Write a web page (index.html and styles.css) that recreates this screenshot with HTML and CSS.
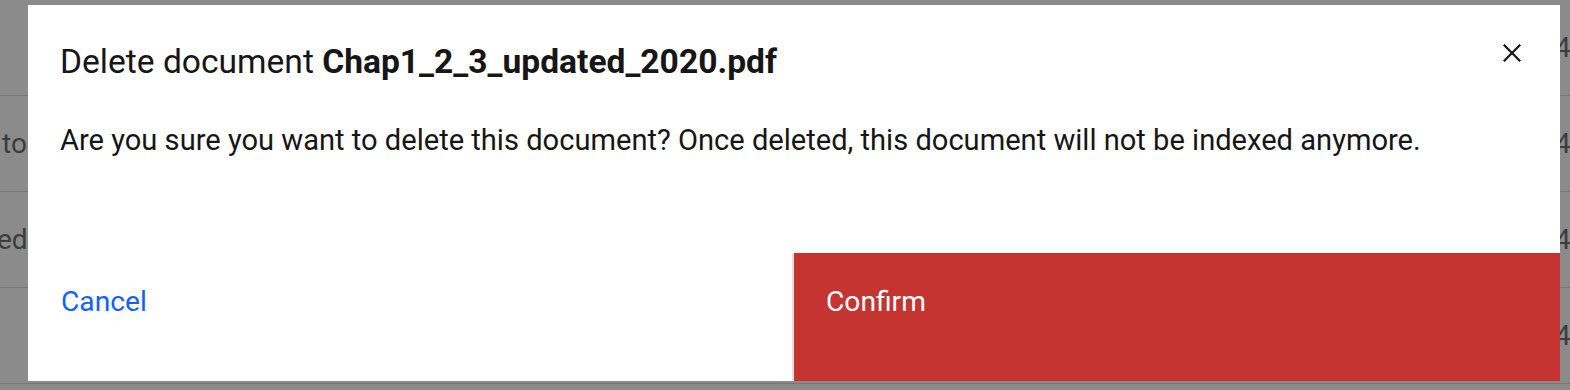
FILE: index.html
```html
<!DOCTYPE html>
<html lang="en">
<head>
<meta charset="utf-8">
<title>Delete document</title>
<link rel="stylesheet" href="styles.css">
</head>
<body>
<div class="table">
  <div class="row"><span class="cell-left"></span><span class="cell-right">4</span></div>
  <div class="row"><span class="cell-left">to</span><span class="cell-right">4</span></div>
  <div class="row"><span class="cell-left cut">ed</span><span class="cell-right">4</span></div>
  <div class="row"><span class="cell-left"></span><span class="cell-right">4</span></div>
  <div class="row row-partial"></div>
</div>

<div class="modal" role="dialog" aria-labelledby="modal-title">
  <header class="modal-header">
    <h2 class="modal-title" id="modal-title">Delete document <strong>Chap1_2_3_updated_2020.pdf</strong></h2>
    <button class="modal-close" type="button" aria-label="Close">
      <svg width="36" height="36" viewBox="0 0 32 32" aria-hidden="true"><path d="M24 9.4L22.6 8 16 14.6 9.4 8 8 9.4 14.6 16 8 22.6 9.4 24 16 17.4 22.6 24 24 22.6 17.4 16 24 9.4z"/></svg>
    </button>
  </header>
  <div class="modal-content">
    <p>Are you sure you want to delete this document? Once deleted, this document will not be indexed anymore.</p>
  </div>
  <footer class="modal-footer">
    <button class="btn btn-ghost" type="button">Cancel</button>
    <button class="btn btn-danger" type="button">Confirm</button>
  </footer>
</div>
</body>
</html>
```
FILE: styles.css
```css
* { box-sizing: border-box; }
html, body { margin: 0; padding: 0; }
body {
  width: 1570px;
  height: 390px;
  overflow: hidden;
  background: #8b8b8b;
  font-family: Roboto, "Liberation Sans", sans-serif;
  position: relative;
}

.table {
  display: flex;
  flex-direction: column;
  height: 390px;
  overflow: hidden;
}
.row {
  flex: none;
  height: 96px;
  border-bottom: 1px solid #767676;
  display: flex;
  align-items: center;
  justify-content: space-between;
  color: #3c3c3c;
  font-size: 28px;
}
.row-partial { flex: 1; height: auto; border-bottom: 0; }
.cell-left { padding-left: 2px; }
.cell-left.cut { margin-left: -3px; padding-left: 0; }
.cell-right { width: 15px; overflow: hidden; white-space: nowrap; }

.modal {
  position: absolute;
  left: 28px;
  top: 5px;
  width: 1532px;
  height: 376px;
  background: #ffffff;
  display: flex;
  flex-direction: column;
  color: #161616;
}
.modal-header { padding: 37px 96px 0 32px; }
.modal-title {
  margin: 0;
  font-size: 33.6px;
  line-height: 40px;
  font-weight: 400;
}
.modal-title strong { font-weight: 700; }
.modal-close {
  position: absolute;
  top: 0;
  right: 0;
  width: 96px;
  height: 96px;
  border: 0;
  padding: 0;
  background: transparent;
  display: flex;
  align-items: center;
  justify-content: center;
  cursor: pointer;
}
.modal-close svg { fill: #161616; }

.modal-content { padding: 38px 96px 0 32px; }
.modal-content p {
  margin: 0;
  font-size: 29.1px;
  line-height: 40px;
  font-weight: 400;
}

.modal-footer {
  margin-top: auto;
  height: 128px;
  display: grid;
  grid-template-columns: 764px 1fr;
}
.btn {
  border: 0;
  margin: 0;
  font-family: inherit;
  font-size: 28.2px;
  line-height: 36px;
  text-align: left;
  padding: 31px 32px 0 33px;
  display: flex;
  align-items: flex-start;
  cursor: pointer;
}
.btn-ghost { background: #ffffff; color: #0f62fe; }
.btn-danger {
  background: #c53431;
  color: #ffffff;
  border-left: 2px solid #e0e0e0;
  padding-left: 32px;
}
```
